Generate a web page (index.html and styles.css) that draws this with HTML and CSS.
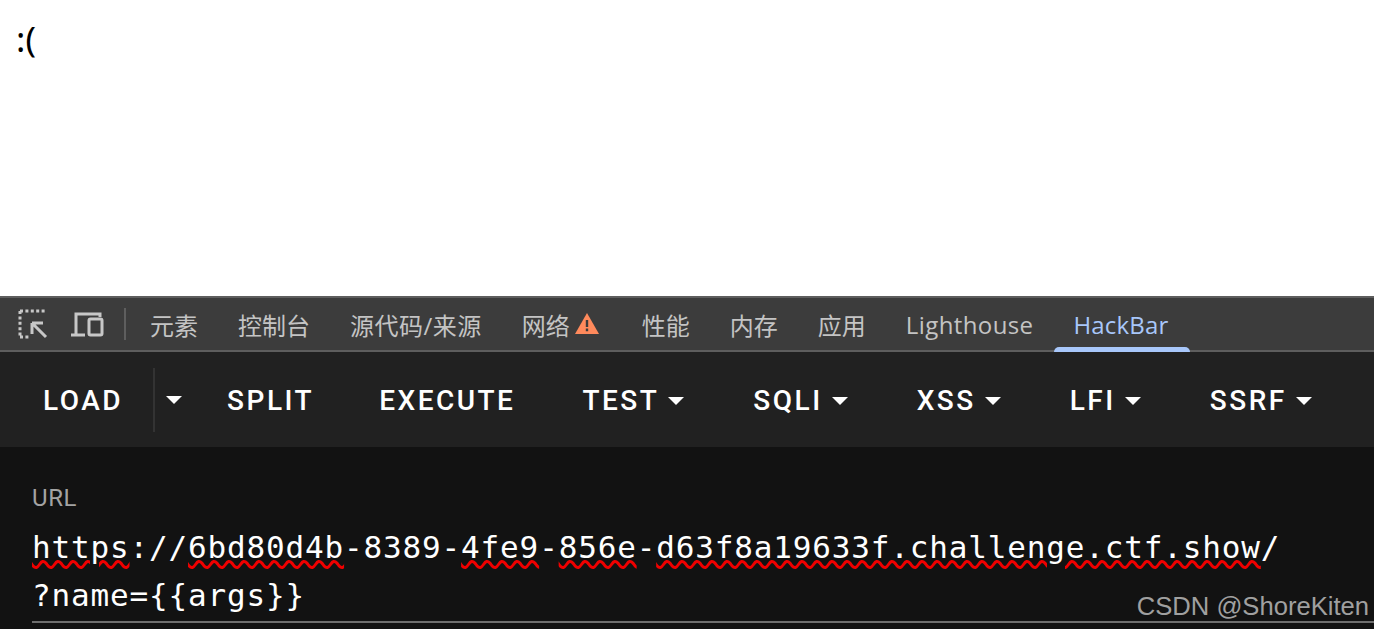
FILE: index.html
```html
<!DOCTYPE html>
<html lang="zh">
<head>
  <meta charset="UTF-8" />
  <title>HackBar</title>
  <link rel="stylesheet" href="styles.css">
</head>
<body>
  <main class="page">
    <p class="page-text">:(</p>
  </main>

  <section class="devtools">
    <nav class="tabbar">
      <svg class="tool-icon inspect" viewBox="0 0 30 30" aria-hidden="true">
        <path class="dots" d="M2 2h26M2 2v26M2 28h9" />
        <path class="arrow" d="M14 14h11M14 14v11M14 14l14 14" />
      </svg>
      <svg class="tool-icon device" viewBox="0 0 34 26" aria-hidden="true">
        <path class="lines" d="M1 24h14M6 23V3h24v3" />
        <rect class="lines" x="19" y="8" width="13" height="16" rx="1.5" />
      </svg>
      <span class="tab-sep"></span>
      <a class="tab">元素</a>
      <a class="tab">控制台</a>
      <a class="tab tab-source">源代码/来源</a>
      <a class="tab tab-warn">网络
        <svg class="warn" viewBox="0 0 24 22" aria-hidden="true">
          <path d="M12 0 24 21H0Z" fill="#ff8a5c" />
          <path d="M10.8 7h2.4v7h-2.4zM10.8 15.6h2.4v2.6h-2.4z" fill="#3c3c3c" />
        </svg>
      </a>
      <a class="tab">性能</a>
      <a class="tab">内存</a>
      <a class="tab">应用</a>
      <a class="tab tab-lighthouse">Lighthouse</a>
      <a class="tab active">HackBar</a>
    </nav>

    <div class="toolbar">
      <button class="btn btn-tight">LOAD</button>
      <button class="btn btn-load-menu"><i class="caret"></i></button>
      <button class="btn btn-tight">SPLIT</button>
      <button class="btn btn-exec">EXECUTE</button>
      <button class="btn">TEST<i class="caret"></i></button>
      <button class="btn">SQLI<i class="caret"></i></button>
      <button class="btn">XSS<i class="caret"></i></button>
      <button class="btn">LFI<i class="caret"></i></button>
      <button class="btn">SSRF<i class="caret"></i></button>
    </div>

    <div class="panel">
      <label class="url-label">URL</label>
      <div class="url-field"><span class="typo">https</span>://<span class="typo">6bd80d4b</span>-8389-<span class="typo">4fe9</span>-<span class="typo">856e</span>-<span class="typo">d63f8a19633f.challenge.ctf.show</span>/<br>?name={{args}}</div>
    </div>
  </section>

  <div class="watermark">CSDN @ShoreKiten</div>
</body>
</html>
```

FILE: styles.css
```css
html, body {
  height: 100%;
}
body {
  margin: 0;
  display: flex;
  flex-direction: column;
  overflow: hidden;
  background: #fff;
  position: relative;
}

.page {
  height: 296px;
  flex: none;
}
.page-text {
  margin: 0;
  padding: 19px 0 0 16px;
  font: 35px/40px "Noto Sans", "Liberation Sans", sans-serif;
  color: #000;
}

.devtools {
  flex: 1;
  display: flex;
  flex-direction: column;
  border-top: 2px solid #5e5e5e;
}

.tabbar {
  height: 52px;
  flex: none;
  display: flex;
  align-items: center;
  padding-left: 18px;
  background: #3c3c3c;
  border-bottom: 2px solid #5e5e5e;
}
.tool-icon {
  flex: none;
  fill: none;
  stroke: #c7c7c7;
}
.inspect {
  width: 30px;
  height: 30px;
  margin-right: 22px;
}
.inspect .dots {
  stroke-width: 3;
  stroke-dasharray: 3 2.4;
}
.inspect .arrow {
  stroke-width: 3;
}
.device {
  width: 34px;
  height: 26px;
}
.device .lines {
  stroke-width: 3;
}
.tab-sep {
  width: 2px;
  height: 32px;
  margin: 0 4px 0 20px;
  background: #5e5e5e;
}
.tab {
  height: 52px;
  display: flex;
  align-items: center;
  padding: 0 20px;
  font: 24px "Open Sans", "Noto Sans CJK SC", sans-serif;
  color: #c4c4c4;
  position: relative;
  white-space: nowrap;
}
.tab-source {
  letter-spacing: 0.5px;
}
.tab-lighthouse {
  letter-spacing: 0.4px;
}
.tab-warn {
  padding-right: 23px;
}
.warn {
  width: 24px;
  height: 22px;
  margin-left: 5px;
}
.tab.active {
  padding-right: 22px;
  letter-spacing: 0.15px;
  color: #a8c7fa;
}
.tab.active::after {
  content: "";
  position: absolute;
  left: 0;
  right: 0;
  bottom: -2px;
  height: 5px;
  background: #a8c7fa;
  border-radius: 5px 5px 0 0;
}

.toolbar {
  height: 95px;
  flex: none;
  display: flex;
  align-items: center;
  padding-left: 9px;
  background: #212121;
}
.btn {
  height: 64px;
  padding: 2px 34px 0;
  display: flex;
  align-items: center;
  border: 0;
  background: none;
  color: #fff;
  font: 500 28px Roboto, sans-serif;
  letter-spacing: 2.5px;
  white-space: nowrap;
}
.btn-tight {
  padding-right: 31px;
}
.btn-exec {
  padding-right: 33px;
}
.btn-load-menu {
  padding: 0 11px;
  margin-left: -1px;
  border-left: 2px solid #333;
}
.caret {
  width: 0;
  height: 0;
  margin: 0 1px 0 9px;
  border-left: 8px solid transparent;
  border-right: 8px solid transparent;
  border-top: 8px solid #fff;
}
.btn-load-menu .caret {
  margin: 0;
}

.panel {
  flex: 1;
  padding: 36px 0 0 32px;
  background: #121212;
}
.url-label {
  display: block;
  font: 24px/30px Roboto, sans-serif;
  letter-spacing: 0.6px;
  color: #a3a3a3;
}
.url-field {
  margin-top: 10px;
  height: 98px;
  font: 31px/48px "DejaVu Sans Mono", monospace;
  letter-spacing: 0.84px;
  color: #fff;
  border-bottom: 2px solid #6e6e6e;
  white-space: nowrap;
}
.typo {
  text-decoration: underline wavy #f00000 3px;
  text-underline-offset: 2px;
}

.watermark {
  position: absolute;
  right: 5px;
  bottom: 8px;
  font: 25.6px "Liberation Sans", sans-serif;
  color: #a0a0a0;
}
```
